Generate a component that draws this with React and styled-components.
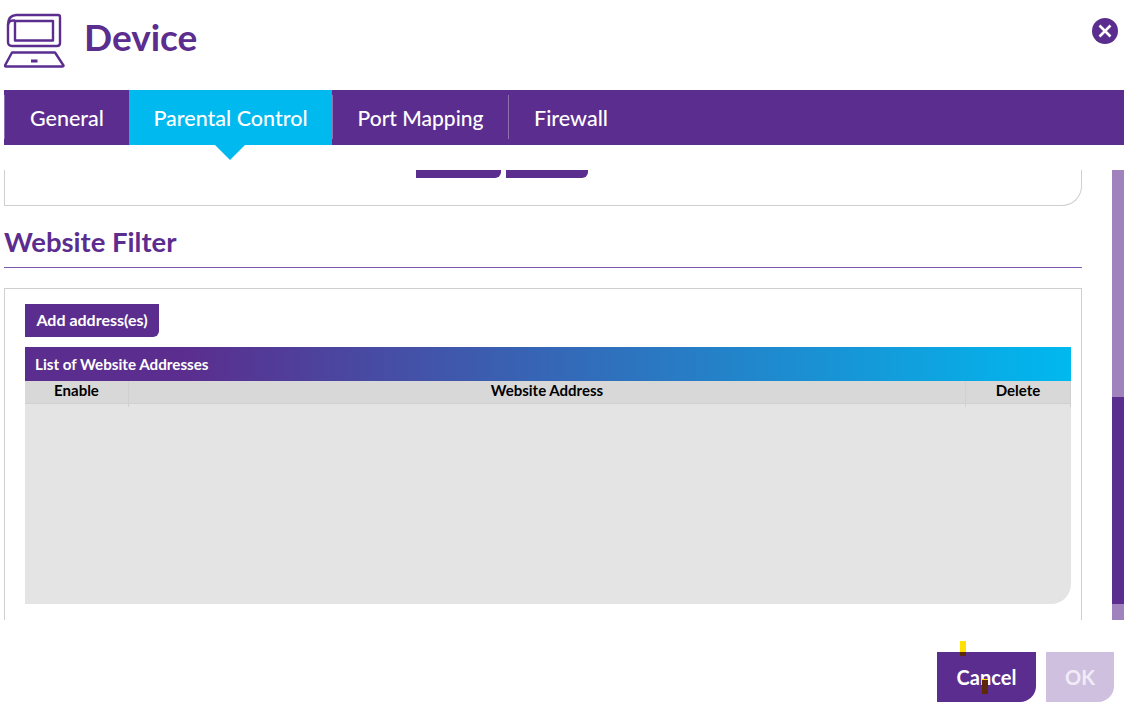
import React from "react";
import styled, { createGlobalStyle } from "styled-components";

const PURPLE = "#5b2d8e";
const CYAN = "#00b9ef";

const Global = createGlobalStyle`
  html, body { margin: 0; padding: 0; background: #fff; }
  body { font-family: "Lato", "Open Sans", sans-serif; overflow: hidden; }
`;

const Page = styled.div`
  position: relative;
  width: 1132px;
  height: 706px;
  display: flex;
  flex-direction: column;
  padding: 0 8px 0 4px;
  box-sizing: border-box;
`;

const Header = styled.header`
  height: 90px;
  display: flex;
  align-items: flex-start;
  justify-content: space-between;
`;

const TitleGroup = styled.div`
  display: flex;
  align-items: center;
  gap: 18px;
  height: 73px;
`;

const Title = styled.h1`
  margin: 0;
  font-size: 37px;
  font-weight: 700;
  color: ${PURPLE};
`;

const CloseButton = styled.button`
  width: 26px;
  height: 26px;
  margin: 18px 6px 0 0;
  padding: 0;
  border: 0;
  border-radius: 50%;
  background: ${PURPLE};
  display: flex;
  align-items: center;
  justify-content: center;
`;

const TabBar = styled.nav`
  height: 55px;
  display: flex;
  background: ${PURPLE};
  position: relative;
`;

const Tab = styled.div`
  position: relative;
  width: ${(p) => p.$w}px;
  display: flex;
  align-items: center;
  justify-content: center;
  font-size: ${(p) => p.$size || 21.5}px;
  font-weight: 500;
  color: #fff;
  background: ${(p) => (p.$active ? CYAN : "transparent")};
  ${(p) =>
    p.$active &&
    `&::after {
      content: "";
      position: absolute;
      left: calc(50% - 15.5px);
      top: 100%;
      border-left: 15px solid transparent;
      border-right: 15px solid transparent;
      border-top: 15px solid ${CYAN};
    }`}
`;

const TabDivider = styled.span`
  width: 1px;
  height: 44px;
  margin-top: 5px;
  background: #8f72b3;
`;

const Viewport = styled.div`
  height: 450px;
  margin-top: 25px;
  display: flex;
  justify-content: space-between;
  overflow: hidden;
`;

const Content = styled.div`
  width: 1078px;
`;

const TopCard = styled.div`
  height: 36px;
  box-sizing: border-box;
  border: 1px solid #cfcfcf;
  border-top: 0;
  border-bottom-right-radius: 20px;
  display: flex;
  justify-content: flex-start;
  gap: 5px;
  padding-left: 411px;
`;

const ClippedButton = styled.div`
  width: ${(p) => p.$w}px;
  height: 8px;
  background: ${PURPLE};
  border-bottom-right-radius: 6px;
`;

const SectionTitle = styled.h2`
  margin: 0;
  height: 62px;
  box-sizing: border-box;
  padding-top: 19px;
  font-size: 27.5px;
  line-height: 34px;
  font-weight: 700;
  color: ${PURPLE};
  border-bottom: 1px solid #7d56ad;
`;

const Card = styled.section`
  margin-top: 20px;
  height: 340px;
  box-sizing: border-box;
  border: 1px solid #cfcfcf;
  padding: 15px 10px 0 20px;
`;

const AddButton = styled.button`
  display: block;
  width: 134px;
  height: 33px;
  padding: 0 0 2px;
  border: 0;
  border-bottom-right-radius: 6px;
  background: ${PURPLE};
  color: #fff;
  font-family: inherit;
  font-size: 16px;
  font-weight: 700;
`;

const TableTitle = styled.div`
  margin-top: 10px;
  height: 34px;
  display: flex;
  align-items: center;
  padding-left: 10px;
  background: linear-gradient(90deg, ${PURPLE} 15%, ${CYAN} 100%);
  color: #fff;
  font-size: 15.2px;
  font-weight: 700;
`;

const ColumnRow = styled.div`
  height: 23px;
  display: grid;
  grid-template-columns: 104px 1fr 105px;
  background: #d8d8d8;
  border-bottom: 1px solid #d0d0d0;
  box-sizing: border-box;
`;

const Column = styled.div`
  display: flex;
  align-items: center;
  justify-content: center;
  padding-bottom: 8px;
  font-size: 15px;
  font-weight: 700;
  color: #000;
  border-right: 1px solid #d0d0d0;
`;

const TableBody = styled.div`
  height: 200px;
  background: #e4e4e4;
  border-bottom-right-radius: 20px;
`;

const ScrollTrack = styled.div`
  width: 12px;
  height: 450px;
  background: #a083bd;
  position: relative;
`;

const ScrollThumb = styled.div`
  position: absolute;
  top: 227px;
  left: 0;
  width: 12px;
  height: 207px;
  background: ${PURPLE};
`;

const Footer = styled.footer`
  margin-top: 32px;
  padding-right: 10px;
  display: flex;
  justify-content: flex-end;
  gap: 10px;
`;

const ActionButton = styled.button`
  width: ${(p) => p.$w}px;
  height: 50px;
  padding: 0;
  border: 0;
  border-bottom-right-radius: 16px;
  background: ${(p) => (p.$disabled ? "#cfc0e0" : PURPLE)};
  color: ${(p) => (p.$disabled ? "#f1ecf6" : "#fff")};
  font-family: inherit;
  font-size: 20px;
  font-weight: 700;
`;

const Marker = styled.span`
  position: absolute;
  left: ${(p) => p.$x}px;
  top: ${(p) => p.$y}px;
  width: 6px;
  height: ${(p) => p.$h}px;
  background: linear-gradient(
    180deg,
    #ffe000 0,
    #ffe000 ${(p) => p.$split}px,
    #5c2a08 ${(p) => p.$split}px,
    #5c2a08 100%
  );
`;

const LaptopIcon = () => (
  <svg
    width="62"
    height="56"
    viewBox="4 12 62 56"
    fill="none"
    stroke={PURPLE}
    strokeWidth="2.4"
    strokeLinejoin="round"
    style={{ flex: "none", marginTop: 6 }}
  >
    <path d="M8 25 Q8 15.5 16 15 H58 Q60 15 60 17 V43 Q60 46 57 46 H12 Q8 46 8 42 Z" />
    <path d="M8 25 Q8 21 13 20.5 H15" />
    <rect x="15" y="21" width="38" height="19.5" />
    <path d="M12 52.5 H55 L63.5 65.5 Q63.5 66.5 62 66.5 H6 Q4.5 66.5 5 65.5 Z" />
    <rect x="31" y="59.5" width="6.5" height="3" fill={PURPLE} stroke="none" />
  </svg>
);

export default function App() {
  return (
    <Page>
      <Global />
      <Header>
        <TitleGroup>
          <LaptopIcon />
          <Title>Device</Title>
        </TitleGroup>
        <CloseButton aria-label="Close">
          <svg width="16" height="16" viewBox="0 0 16 16" stroke="#fff" strokeWidth="2.6">
            <path d="M2.5 2.5 L13.5 13.5 M13.5 2.5 L2.5 13.5" />
          </svg>
        </CloseButton>
      </Header>
      <TabBar>
        <TabDivider />
        <Tab $w={124}>General</Tab>
        <Tab $w={203} $active>Parental Control</Tab>
        <TabDivider />
        <Tab $w={175} $size={21}>Port Mapping</Tab>
        <TabDivider />
        <Tab $w={124}>Firewall</Tab>
      </TabBar>
      <Viewport>
        <Content>
          <TopCard>
            <ClippedButton $w={85} />
            <ClippedButton $w={82} />
          </TopCard>
          <SectionTitle>Website Filter</SectionTitle>
          <Card>
            <AddButton>Add address(es)</AddButton>
            <TableTitle>List of Website Addresses</TableTitle>
            <ColumnRow>
              <Column>Enable</Column>
              <Column>Website Address</Column>
              <Column>Delete</Column>
            </ColumnRow>
            <TableBody />
          </Card>
        </Content>
        <ScrollTrack>
          <ScrollThumb />
        </ScrollTrack>
      </Viewport>
      <Footer>
        <ActionButton $w={99}>Cancel</ActionButton>
        <ActionButton $w={68} $disabled>OK</ActionButton>
      </Footer>
      <Marker $x={960} $y={641} $h={15} $split={11} />
      <Marker $x={982} $y={679} $h={15} $split={1} />
    </Page>
  );
}
